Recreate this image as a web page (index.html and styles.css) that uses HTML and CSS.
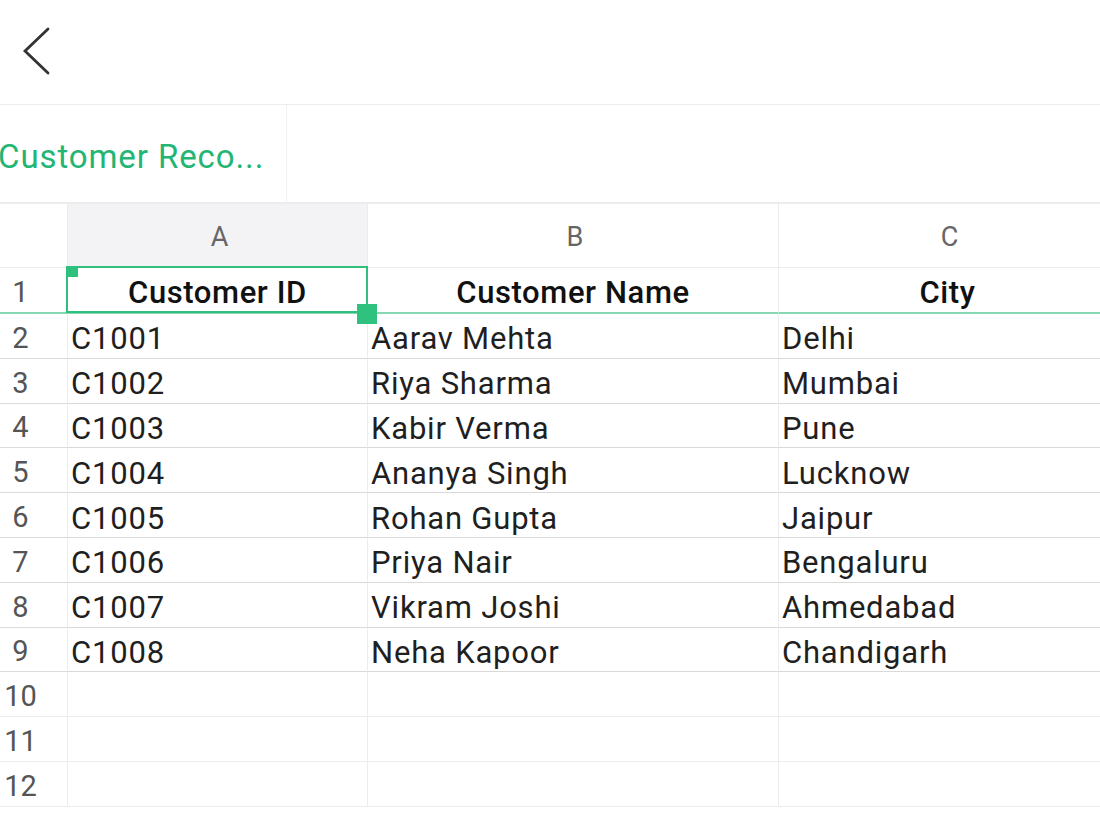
FILE: index.html
```html
<!DOCTYPE html>
<html>
<head>
<meta charset="utf-8">
<link rel="stylesheet" href="styles.css">
</head>
<body>
<div class="app">
  <div class="topbar">
    <svg class="back" width="40" height="56" viewBox="0 0 40 56"><path d="M26 6 L3 28 L26 50" fill="none" stroke="#333" stroke-width="2.8" stroke-linecap="round" stroke-linejoin="miter"/></svg>
  </div>
  <div class="tabs">
    <div class="tab">Customer Reco...</div>
  </div>
  <div class="sheet">
    <div class="corner"></div>
    <div class="colhead sel">A</div>
    <div class="colhead">B</div>
    <div class="colhead">C</div>

    <div class="rowhead first">1</div>
    <div class="cell hdr first a1">Customer ID<span class="sel-box"></span><span class="dot-tl"></span><span class="handle"></span></div>
    <div class="cell hdr first">Customer Name</div>
    <div class="cell hdr first">City</div>

    <div class="rowhead">2</div><div class="cell">C1001</div><div class="cell">Aarav Mehta</div><div class="cell">Delhi</div>
    <div class="rowhead">3</div><div class="cell">C1002</div><div class="cell">Riya Sharma</div><div class="cell">Mumbai</div>
    <div class="rowhead">4</div><div class="cell">C1003</div><div class="cell">Kabir Verma</div><div class="cell">Pune</div>
    <div class="rowhead">5</div><div class="cell">C1004</div><div class="cell">Ananya Singh</div><div class="cell">Lucknow</div>
    <div class="rowhead">6</div><div class="cell">C1005</div><div class="cell">Rohan Gupta</div><div class="cell">Jaipur</div>
    <div class="rowhead">7</div><div class="cell">C1006</div><div class="cell">Priya Nair</div><div class="cell">Bengaluru</div>
    <div class="rowhead">8</div><div class="cell">C1007</div><div class="cell">Vikram Joshi</div><div class="cell">Ahmedabad</div>
    <div class="rowhead">9</div><div class="cell">C1008</div><div class="cell">Neha Kapoor</div><div class="cell">Chandigarh</div>
    <div class="rowhead light">10</div><div class="cell light"></div><div class="cell light"></div><div class="cell light"></div>
    <div class="rowhead light">11</div><div class="cell light"></div><div class="cell light"></div><div class="cell light"></div>
    <div class="rowhead light">12</div><div class="cell light"></div><div class="cell light"></div><div class="cell light"></div>
  </div>
</div>
</body>
</html>
```

FILE: styles.css
```css
* { box-sizing: border-box; }
html, body { margin: 0; padding: 0; background: #fff; }
body { font-family: Roboto, "Noto Sans", sans-serif; color: #222; width: 1100px; height: 826px; overflow: hidden; }

.topbar {
  height: 105px;
  border-bottom: 1px solid #ececec;
  display: flex;
  align-items: flex-start;
  padding: 23px 0 0 22px;
}
.back { display: block; }

.tabs {
  height: 99px;
  display: flex;
  border-bottom: 2px solid #ececec;
}
.tab {
  width: 289px;
  border-right: 1px solid #f1f1f1;
  color: #22b573;
  font-size: 33px;
  letter-spacing: 0.9px;
  line-height: 1;
  display: flex;
  align-items: center;
  margin-left: -2px;
  padding-top: 5px;
  white-space: nowrap;
}

.sheet {
  display: grid;
  width: 1117px;
  grid-template-columns: 68px 300px 411px 338px;
  grid-template-rows: 64px 46px repeat(11, 44.8px);
}
.corner, .colhead {
  border-right: 1px solid #ececec;
  border-bottom: 1px solid #ececec;
}
.colhead {
  display: flex;
  align-items: center;
  justify-content: center;
  font-size: 27px;
  color: #666;
  padding-top: 3px;
  padding-left: 4px;
}
.colhead.sel { background: #f3f3f5; }

.rowhead {
  display: flex;
  align-items: center;
  justify-content: center;
  padding-right: 26px;
  padding-top: 4px;
  font-size: 29px;
  color: #555;
  border-right: 1px solid #ececec;
  border-bottom: 1px solid #dcdcdc;
}
.cell {
  display: flex;
  align-items: center;
  padding-left: 3px;
  padding-top: 6px;
  font-size: 31px;
  letter-spacing: 0.8px;
  color: #1f1f1f;
  border-right: 1px solid #ececec;
  border-bottom: 1px solid #d9d9d9;
  white-space: nowrap;
}
.light { border-bottom-color: #ececec; }

.first { border-bottom: 2px solid #86d8b3; }
.hdr {
  justify-content: center;
  font-weight: 500;
  letter-spacing: 0.6px;
  color: #111;
  padding-left: 0;
  padding-top: 5px;
}
.a1 { position: relative; }
.sel-box {
  position: absolute;
  left: -2px;
  top: -2px;
  right: -1px;
  bottom: -1px;
  border: 2px solid #2fc07e;
  pointer-events: none;
}
.dot-tl {
  position: absolute;
  left: -2px;
  top: -2px;
  width: 12px;
  height: 11px;
  background: #2fc07e;
}
.handle {
  position: absolute;
  right: -10px;
  bottom: -12px;
  width: 20px;
  height: 20px;
  background: #2ec27e;
  z-index: 2;
}
```
